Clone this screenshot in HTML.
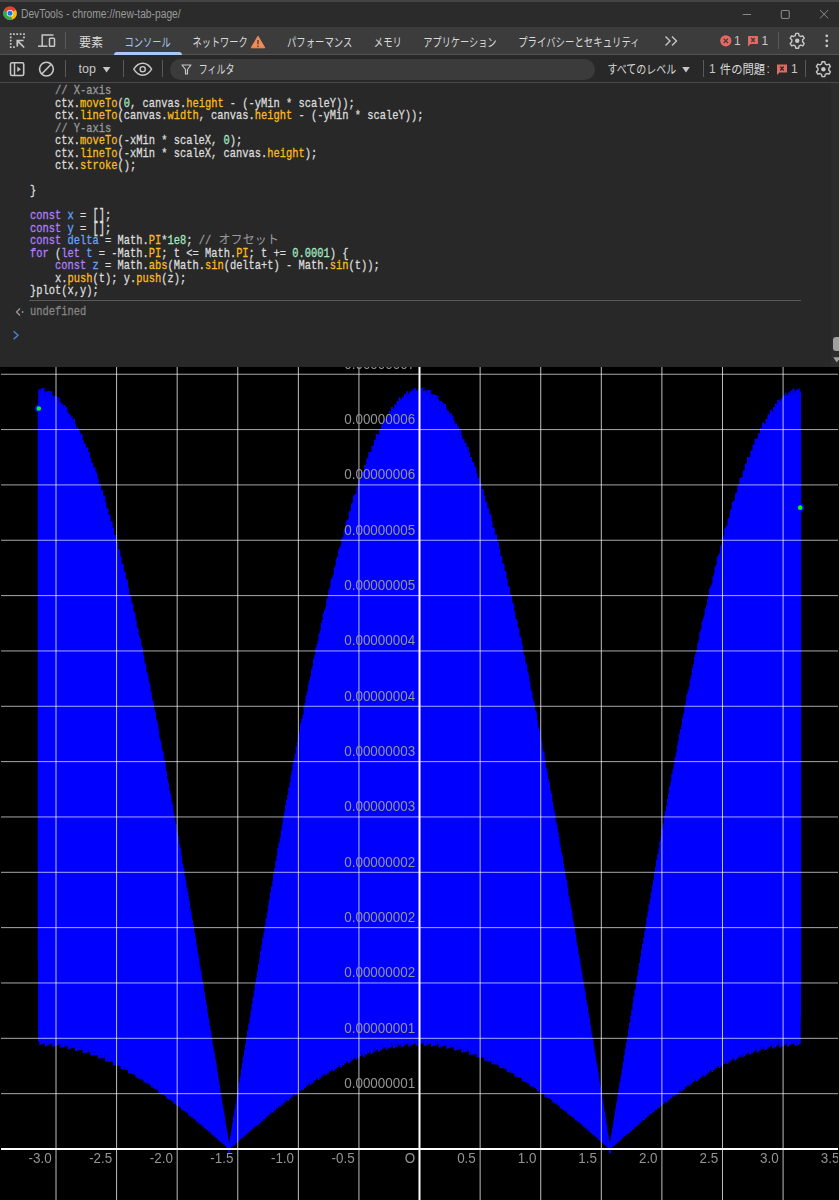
<!DOCTYPE html>
<html lang="ja">
<head>
<meta charset="utf-8">
<title>DevTools - chrome://new-tab-page/</title>
<style>
html,body{margin:0;padding:0;background:#000;}
body{width:839px;height:1200px;position:relative;overflow:hidden;font-family:"Liberation Sans",sans-serif;}
.abs{position:absolute;}
#winborder{left:0;top:0;width:839px;height:2px;background:#444;}
#titlebar{left:0;top:2px;width:839px;height:25px;background:#2b2b2b;}
#title{left:21px;top:6px;font-size:12px;line-height:16px;color:#9a9a9a;white-space:nowrap;transform-origin:0 0;transform:scaleX(.855);}
#tabbar{left:0;top:27px;width:839px;height:27px;background:#3c3c3c;}
#tabline{left:0;top:54px;width:839px;height:1px;background:#545454;}
#toolbar{left:0;top:55px;width:839px;height:27px;background:#282828;}
#toolline{left:0;top:82px;width:839px;height:1px;background:#4a4a4a;}
#console{left:0;top:83px;width:839px;height:284px;background:#282828;}
#tabsel{left:114px;top:52px;width:68px;height:3px;background:#a8c7fa;border-radius:3px 3px 0 0;}
#pill{left:170px;top:59px;width:425px;height:21px;border-radius:11px;background:#3b3b3b;}
.sep{width:1px;background:#5a5a5a;}
.lat{font-size:12px;line-height:14px;color:#c7c7c7;white-space:nowrap;opacity:.999;}
#code{left:29.6px;top:85px;font-family:"Liberation Mono",monospace;font-size:13.2px;line-height:12.5px;color:#dcdcdc;white-space:pre;transform:scaleX(.78914);transform-origin:0 0;margin:0;-webkit-text-stroke:.3px;}
#code .b{display:inline-block;transform:scaleY(1.28);transform-origin:50% 55%;}
#code .c{color:#9a9a9a;}
#code .p{color:#fcbb1c;}
#code .n{color:#a2e8c2;}
#code .k{color:#b07eff;}
#code .d{color:#64a2ff;}
#divider{left:29px;top:300px;width:772px;height:1px;background:#5a5a5a;}
#undef{left:29.6px;top:306px;font-family:"Liberation Mono",monospace;font-size:13.2px;line-height:12.5px;color:#858585;white-space:pre;transform:scaleX(.78914);transform-origin:0 0;-webkit-text-stroke:.3px;}
#sbtrack{left:831px;top:83px;width:8px;height:284px;background:#2c2c2c;}
#sbthumb{left:833px;top:337px;width:10px;height:13.5px;border-radius:3px;background:#9f9f9f;}
</style>
</head>
<body>
<div class="abs" id="winborder"></div>
<div class="abs" id="titlebar"></div>
<div class="abs" id="title">DevTools - chrome://new-tab-page/</div>
<div class="abs" id="tabbar"></div>
<div class="abs" id="tabline"></div>
<div class="abs" id="tabsel"></div>
<div class="abs" id="toolbar"></div>
<div class="abs" id="toolline"></div>
<div class="abs" id="pill"></div>
<div class="abs" id="console"></div>
<div class="abs" id="sbtrack"></div>
<div class="abs" id="sbthumb"></div>

<!-- separators -->
<div class="abs sep" style="left:65px;top:32px;height:17px"></div>
<div class="abs sep" style="left:778px;top:32px;height:17px"></div>
<div class="abs sep" style="left:65px;top:60px;height:17px"></div>
<div class="abs sep" style="left:122.5px;top:60px;height:17px;width:1.5px"></div>
<div class="abs sep" style="left:162px;top:60px;height:17px"></div>
<div class="abs sep" style="left:703px;top:60px;height:17px"></div>
<div class="abs sep" style="left:805px;top:60px;height:17px"></div>

<!-- latin labels -->
<div class="abs lat" style="left:78.5px;top:62px;font-size:12.5px">top</div>
<div class="abs lat" style="left:734px;top:34px;">1</div>
<div class="abs lat" style="left:761.5px;top:34px;">1</div>
<div class="abs lat" style="left:709px;top:62px;">1</div>
<div class="abs lat" style="left:766.5px;top:62px;">:</div>
<div class="abs lat" style="left:791px;top:62px;">1</div>

<!-- icons -->
<svg class="abs" style="left:0;top:0" width="839" height="83" viewBox="0 0 839 83" fill="none">
  <!-- chrome logo -->
  <g transform="translate(10,13.3)">
    <circle r="6.8" fill="#e94235"/>
    <path d="M0 0L-5.9 -3.4A6.8 6.8 0 0 0 2.2 6.43Z" fill="#34a853"/>
    <path d="M0 0L2.2 6.43A6.8 6.8 0 0 0 5.9 -3.4L0 -3.4Z" fill="#fbbc04"/>
    <path d="M0 0L-5.9 -3.4A6.8 6.8 0 0 1 5.9 -3.4Z" fill="#e94235"/>
    <circle r="3.2" fill="#fff"/>
    <circle r="2.5" fill="#1a73e8"/>
  </g>
  <!-- window controls -->
  <path d="M742.8 14.5H751" stroke="#8a8a8a" stroke-width="1"/>
  <rect x="781.3" y="10.5" width="8" height="8" rx="1.4" stroke="#8a8a8a" stroke-width="1.1"/>
  <path d="M820 10L828.2 18.4M828.2 10L820 18.4" stroke="#8a8a8a" stroke-width="1"/>
  <!-- inspect icon -->
  <path d="M9.85 33.35h1.7v1.7h-1.7zM13.10 33.35h1.7v1.7h-1.7zM16.35 33.35h1.7v1.7h-1.7zM19.75 33.35h1.7v1.7h-1.7zM23.15 33.35h1.7v1.7h-1.7zM9.85 36.55h1.7v1.7h-1.7zM9.85 39.75h1.7v1.7h-1.7zM9.85 42.95h1.7v1.7h-1.7zM9.85 46.25h1.7v1.7h-1.7zM13.10 46.25h1.7v1.7h-1.7zM23.15 36.55h1.7v1.7h-1.7z" fill="#c7c7c7"/>
  <path d="M17.3 40.6L24.2 47.5M17.3 46.4V40.5H23.6" stroke="#c7c7c7" stroke-width="1.7"/>
  <!-- device icon -->
  <g stroke="#c7c7c7" stroke-width="1.5">
    <path d="M42.2 46V35H53.5"/>
    <path d="M38 46.2H47.5"/>
    <rect x="49.5" y="38.2" width="5" height="8" rx="0.8"/>
  </g>
  <!-- warning triangle -->
  <path d="M258 36.2L264.8 47.8H251.2Z" fill="#f28b55" stroke="#f28b55" stroke-width="1" stroke-linejoin="round"/>
  <path d="M258 40V44.3M258 45.6V47" stroke="#3c3c3c" stroke-width="1.3"/>
  <!-- chevrons -->
  <path d="M665.5 36.5L670 41L665.5 45.5M672 36.5L676.5 41L672 45.5" stroke="#c7c7c7" stroke-width="1.4"/>
  <!-- error icon -->
  <circle cx="725.8" cy="40.8" r="5.6" fill="#e46962"/>
  <path d="M723.6 38.6L728 43M728 38.6L723.6 43" stroke="#3c3c3c" stroke-width="1.3"/>
  <!-- issue flag (tab bar) -->
  <path d="M748 36H758V44H750.5L748 46.5Z" fill="#e46962"/>
  <path d="M751.3 38L754.7 42M754.7 38L751.3 42" stroke="#3c3c3c" stroke-width="1.2"/>
  <!-- gear (tab bar) -->
  <g transform="translate(797.2,40.8)"><use href="#gear"/></g>
  <!-- dots -->
  <circle cx="826.8" cy="35.8" r="1.4" fill="#c7c7c7"/><circle cx="826.8" cy="40.8" r="1.4" fill="#c7c7c7"/><circle cx="826.8" cy="45.8" r="1.4" fill="#c7c7c7"/>
  <!-- sidebar icon -->
  <rect x="10.5" y="62.7" width="13.2" height="12.8" rx="1.5" stroke="#c7c7c7" stroke-width="1.6"/>
  <path d="M14.5 62.7V75.5" stroke="#c7c7c7" stroke-width="1.5"/>
  <path d="M17.3 66.4L20.8 69.2L17.3 72Z" fill="#c7c7c7"/>
  <!-- clear icon -->
  <circle cx="46.45" cy="69.1" r="6.9" stroke="#c7c7c7" stroke-width="1.6"/>
  <path d="M41.7 74L51.2 64.2" stroke="#c7c7c7" stroke-width="1.6"/>
  <!-- top dropdown -->
  <path d="M102.8 66.9H110.4L106.6 72.6Z" fill="#c7c7c7"/>
  <!-- eye -->
  <path d="M133.8 69.2C136.5 64.6 140 63.2 142.7 63.2C145.4 63.2 148.9 64.6 151.6 69.2C148.9 73.8 145.4 75.2 142.7 75.2C140 75.2 136.5 73.8 133.8 69.2Z" stroke="#c7c7c7" stroke-width="1.4"/>
  <circle cx="142.7" cy="69.2" r="2.6" stroke="#c7c7c7" stroke-width="1.4"/>
  <!-- funnel -->
  <path d="M182 65H191L187.5 69.5V74H185.5V69.5Z" stroke="#c7c7c7" stroke-width="1.2" stroke-linejoin="round"/>
  <!-- level dropdown -->
  <path d="M682.2 66.9H689.8L686 72.6Z" fill="#c7c7c7"/>
  <!-- issue flag toolbar -->
  <path d="M777 64.5H787V72.5H779.5L777 75Z" fill="#e46962"/>
  <path d="M780.3 66.5L783.7 70.5M783.7 66.5L780.3 70.5" stroke="#282828" stroke-width="1.2"/>
  <!-- gear (toolbar) -->
  <g transform="translate(823.4,69.2)"><use href="#gear"/></g>
  <!-- scrollbar arrows -->
  <path d="M833.2 92.9L836.8 86.7L840.4 92.9Z" fill="#9f9f9f"/>
  <defs>
    <g id="gear">
      <path d="M-1.4 -7.6H1.4L1.9 -5.4L3.5 -4.5L5.6 -5.2L7 -2.8L5.4 -1.2V0.8L7 2.4L5.6 4.8L3.5 4.1L1.9 5L1.4 7.2H-1.4L-1.9 5L-3.5 4.1L-5.6 4.8L-7 2.4L-5.4 0.8V-1.2L-7 -2.8L-5.6 -5.2L-3.5 -4.5L-1.9 -5.4Z" stroke="#c7c7c7" stroke-width="1.4" stroke-linejoin="round" transform="translate(0,0.2)"/>
      <circle r="2.2" fill="#c7c7c7"/>
    </g>
  </defs>
</svg>
<svg class="abs" style="left:0;top:83px" width="839" height="284" viewBox="0 83 839 284" fill="none">
  <path d="M833.2 357.2H840.4L836.8 362.6Z" fill="#9f9f9f"/>
  <!-- result arrow -->
  <path d="M20 308.5L16.5 312L20 315.5" stroke="#9a9a9a" stroke-width="1.3"/>
  <circle cx="22.6" cy="312" r="0.9" fill="#9a9a9a"/>
  <!-- prompt -->
  <path d="M13.6 331.3L18 335.3L13.6 339.3" stroke="#4a80dc" stroke-width="1.4"/>
  <text x="218.5" y="244" font-size="12" fill="#9a9a9a" textLength="60.5" lengthAdjust="spacing" style='font-family:"Liberation Sans","Noto Sans CJK JP",sans-serif'>オフセット</text>
</svg>

<svg style="position:absolute;left:0;top:0" width="839" height="83" viewBox="0 0 839 83" font-size="12" style='font-family:"Liberation Sans","Noto Sans CJK JP",sans-serif'>
<g style='font-family:"Liberation Sans","Noto Sans CJK JP",sans-serif' font-size="12">
<text x="79" y="47" fill="#dadada" textLength="24.2" lengthAdjust="spacingAndGlyphs">要素</text>
<text x="124.5" y="47" fill="#a8c7fa" textLength="46.2" lengthAdjust="spacingAndGlyphs">コンソール</text>
<text x="192.5" y="47" fill="#dadada" textLength="55.2" lengthAdjust="spacingAndGlyphs">ネットワーク</text>
<text x="287" y="47" fill="#dadada" textLength="65.4" lengthAdjust="spacingAndGlyphs">パフォーマンス</text>
<text x="373.8" y="47" fill="#dadada" textLength="28" lengthAdjust="spacingAndGlyphs">メモリ</text>
<text x="423.3" y="47" fill="#dadada" textLength="73.2" lengthAdjust="spacingAndGlyphs">アプリケーション</text>
<text x="518.2" y="47" fill="#dadada" textLength="121.5" lengthAdjust="spacingAndGlyphs">プライバシーとセキュリティ</text>
<text x="198.8" y="73.5" fill="#dadada" textLength="35.7" lengthAdjust="spacingAndGlyphs">フィルタ</text>
<text x="607.5" y="73.5" fill="#dadada" textLength="68.8" lengthAdjust="spacingAndGlyphs">すべてのレベル</text>
<text x="719.8" y="73.5" fill="#dadada" textLength="45.4" lengthAdjust="spacingAndGlyphs">件の問題</text>
</g>
</svg>

<pre class="abs" id="code">    <span class="c">// X-axis</span>
    ctx.<span class="p">moveTo</span>(<span class="n">0</span>, canvas.<span class="p">height</span> - (-yMin * scaleY));
    ctx.<span class="p">lineTo</span>(canvas.<span class="p">width</span>, canvas.<span class="p">height</span> - (-yMin * scaleY));
    <span class="c">// Y-axis</span>
    ctx.<span class="p">moveTo</span>(-xMin * scaleX, <span class="n">0</span>);
    ctx.<span class="p">lineTo</span>(-xMin * scaleX, canvas.<span class="p">height</span>);
    ctx.<span class="p">stroke</span>();

}

<span class="k">const</span> <span class="d">x</span> = <span class="b">[]</span>;
<span class="k">const</span> <span class="d">y</span> = <span class="b">[]</span>;
<span class="k">const</span> <span class="d">delta</span> = Math.<span class="p">PI</span>*<span class="n">1e8</span>; <span class="c">// </span>
<span class="k">for</span> (<span class="k">let</span> <span class="d">t</span> = -Math.<span class="p">PI</span>; t &lt;= Math.<span class="p">PI</span>; t += <span class="n">0.0001</span>) {
    <span class="k">const</span> <span class="d">z</span> = Math.<span class="p">abs</span>(Math.<span class="p">sin</span>(delta+t) - Math.<span class="p">sin</span>(t));
    x.<span class="p">push</span>(t); y.<span class="p">push</span>(z);
}plot(x,y);</pre>
<div class="abs" id="divider"></div>
<div class="abs" id="undef">undefined</div>

<svg style="position:absolute;left:0;top:367px" width="839" height="833" viewBox="0 367 839 833">
<rect x="0" y="367" width="839" height="833" fill="#000"/>
<path d="M37.75 959.5V408.5h.5V389.5h2V392.7h.25V388.6h2V388h2V391.4h1.25V395h.25V391.2h2V391.1h2V394.9h.25V391.3h2V395.3h1V399.2h.25V395.8h2V396.6h2V400.8h.25V397.6h2V402h1.25V403.4h2V407.9h.25V405h2V406.9h2V411.7h1.25V413.9h2V418.8h.25V416.4h2V421.4h.25V419h2V424.2h1V429.4h.25V427.3h2V430.5h2V436h.25V434.1h2V439.6h1.25V443.4h2V449.1h.25V447.5h2V451.8h2V457.7h1.25V462.4h2V468.4h.25V467.3h2V472.4h2V478.6h1.25V484.8h.25V484h2V489.7h2V496.1h.25V495.5h2V502.1h1V508.6h.25V508.2h2V514.6h2V521.4h.25V521.2h2V528h1.25V534.9h1V535h1V541.7h.25V541.9h1V542.1h1V548.8h.25V549.1h.75V549.4h1V556.1h.25V556.5h1V563.1h.25V563.5h1V564.1h1V571.2h1V571.9h1V578.4h.25V579.1h1V579.9h1V587.2h1V593.6h.25V594.5h1V595.5h1V601.8h.25V602.8h1V604h.75V610.2h.25V611.4h1V612.6h1V618.8h.25V620.1h1V627.6h1V629h1V635.1h.25V636.6h1V638.2h1V644.1h.25V645.8h.75V647.5h1V653.4h.25V655.1h1V660.9h.25V662.8h1V664.6h.75V670.4h.25V672.3h1V674.4h1V680h.25V682.1h1V684.2h.75V689.8h.25V692h1V697.6h.25V699.8h1V702.1h1V707.6h.25V709.9h.75V712.4h1V717.8h.25V720.3h1V722.8h1V728.1h.25V730.7h.75V735.9h.25V738.6h1V741.4h1V746.5h.25V749.3h1V752.2h1V760.1h1V763.1h1V768h.25V771.1h1V775.9h.25V779h.75V782.2h1V786.9h.25V790.2h1V793.5h1V798.1h.25V801.4h1V804.9h.75V809.4h.25V812.9h1V817.4h.25V820.9h1V824.4h1V832.4h1V836.1h1V840.4h.25V844.2h1V848h1V852.1h.25V856h.75V860.1h.25V864h1V868h1V872h.25V875.9h.25V876h.75V880.1h.75V883.9h.25V887.8h.25V888.1h.75V891.9h.25V892.3h.75V896h.25V899.8h.25V900.3h.75V904h.25V908.2h.75V911.9h.25V912.6h.75V916.2h.25V919.7h.25V920.6h.75V924.1h.25V925h.75V928.5h.25V933h.75V936.4h.25V937.6h.75V940.9h.25V944.2h.25V945.5h.75V948.8h.25V952.1h.25V953.4h.75V956.6h.25V958.1h.5V961.3h.25V964.5h.25V966h.75V969.1h.25V970.9h.75V973.9h.25V976.9h.25V978.8h.75V981.7h.25V983.7h.75V989.5h.25V991.6h.75V994.4h.25V997.2h.25V999.4h.75V1002.2h.25V1004.4h.75V1007.2h.25V1009.9h.25V1012.2h.5V1014.9h.25V1017.4h.75V1020h.25V1022.6h.25V1025.2h.75V1027.7h.25V1030.2h.25V1030.4h.5V1032.9h.25V1035.4h.25V1038.2h.75V1043h.25V1045.4h.25V1045.9h.5V1048.3h.25V1050.6h.25V1051.3h.5V1053.6h.25V1055.9h.25V1058.1h.25V1059h.5V1061.2h.25V1063.4h.25V1064.4h.5V1068.8h.25V1070.9h.25V1072.1h.5V1074.2h.25V1076.3h.25V1077.7h.5V1079.7h.25V1081.7h.25V1083.7h.25V1085.3h.5V1087.3h.25V1089.2h.25V1092.9h.75V1096.6h.25V1098.5h.5V1100.4h.25V1102.2h.25V1104h.25V1105.7h.25V1106.1h.25V1107.8h.25V1109.6h.25V1111.3h.25V1111.8h.25V1113.5h.25V1115.2h.25V1116.9h.25V1119.3h.5V1122.6h.25V1124.2h.25V1125.2h.25V1126.8h.25V1128.3h.25V1129.9h.25V1131.4h.25V1132.6h.25V1134.1h.25V1135.6h.25V1137.1h.25V1138.5h.25V1140h.25V1141.4h.25V1142.9h.25V1142.1h.25V1140.8h.25V1138.7h.25V1137.4h.25V1136.1h.25V1135h.25V1133.8h.25V1131.4h.25V1130.2h.25V1129h.25V1126.8h.25V1125.2h.25V1123h.25V1121.9h.25V1120.9h.25V1118h.25V1116.9h.25V1115.9h.25V1114.9h.25V1113.9h.25V1110.8h.25V1109.8h.25V1108.9h.25V1108h.25V1104.6h.25V1103.7h.25V1102.8h.25V1101.1h.25V1100.3h.25V1097.5h.25V1095.8h.25V1095h.25V1091.2h.25V1090.4h.25V1089.6h.25V1088.9h.25V1088.2h.25V1084.1h.25V1083.4h.25V1082.7h.25V1082h.25V1077.7h.25V1077.1h.25V1076.4h.25V1075.8h.25V1074.7h.25V1070.7h.25V1069.6h.25V1069h.25V1068.5h.25V1063.8h.25V1063.2h.25V1062.8h.25V1062.3h.25V1057.3h.25V1056.9h.25V1056.4h.25V1056h.25V1055.7h.25V1050.4h.25V1050h.25V1049.7h.25V1049.1h.25V1043.9h.25V1043.6h.25V1043h.25V1042.8h.25V1037.1h.25V1036.8h.25V1036.6h.25V1036.4h.25V1030.5h.25V1030.3h.25V1030.2h.25V1030h.25V1029.9h.25V1023.7h.25V1023.6h.25V1023.5h.5V1023.4h.25V1017h1V1010.4h1V1003.8h1V997.1h1.25V990.5h1V983.7h1V977.3h1.25V970.8h1V964h1.25V957.7h.75V950.8h1.25V944.6h1V937.6h1.25V931.4h1V925.3h1V918.4h1.25V912.4h1V905.3h1V899.4h1V892.3h1.25V886.5h1.25V880.7h.75V873.6h1.25V867.9h1V860.8h1.25V855.2h.75V848h1.25V842.6h1.25V837.1h1V829.9h1V824.6h1V817.4h1.25V812.2h1V804.9h1V799.8h1.25V794.8h1V787.5h1.25V782.6h1V775.3h1V770.5h1V763.2h1.25V758.4h1V753.8h1V746.5h1.25V742h1V734.6h1.25V730.2h.75V722.9h1.25V718.6h1.25V714.4h1V707.1h1V702.9h1V695.6h1.25V691.6h1V684.3h1V680.4h1.25V676.6h1V669.3h1.25V665.7h.75V658.4h1.25V654.8h1V647.5h1.25V644.1h1V640.7h1V633.5h1.25V630.3h1V623h1V619.9h1V612.7h1.25V609.7h1.25V606.8h1V599.6h1V596.9h1V589.7h1.25V587.1h1V580h1V577.5h1.25V575.1h1V568h1V565.7h1V558.6h1.25V556.5h1V549.4h1.25V547.4h1V545.5h1V538.5h1.25V536.7h1V529.8h1V528.2h1V521.3h1.25V519.7h1.25V518.3h.75V511.5h1.25V510.2h1V503.4h1.25V502.3h.75V495.6h1.25V494.5h1.25V493.6h1V487h1V486.2h1V479.6h1.25V478.9h1V472.4h1V471.9h1.25V471.4h1V465h1.25V464.7h1V458.3h1V458.2h1V451.9h1.25V451.8h2V445.7h2V445.9h.25V439.8h2V434.1h2V434.5h1.25V435.1h.25V429.2h2V424h2V424.8h.25V419.1h2V420h1V421.1h.25V415.4h2V411h2V412.4h.25V406.9h2V408.4h1.25V404.6h2V406.2h.25V401h2V397.6h2V399.6h1.25V396.6h2V398.8h.25V393.8h2V396.1h.25V391.3h2V393.7h1V396.3h.25V391.6h2V389.6h2V392.4h.25V387.9h2V390.8h1.25V389.5h2V392.6h.25V388.4h2V387.5h2V390.9h1.25V390.4h2V394h.25V390.1h4V393.9h1.25V397.8h.25V394.3h2V394.8h2V399h.25V395.7h2V399.9h1V404.2h.25V401.1h2V402.5h2V407h.25V404.1h2V408.8h1.25V410.8h2V415.6h.25V413h2V415.5h2V420.6h1.25V425.7h.25V423.4h2V426.5h2V431.8h.25V429.8h2V435.2h1V440.7h.25V438.9h2V442.7h2V448.4h.25V446.8h2V452.6h1.25V457.1h2V463h.25V461.8h2V466.6h2V472.8h1.25V478h2V484.3h.25V483.4h2V489.1h2V495.6h1.25V502h.25V501.5h2V507.7h2V514.4h.25V514.2h2V520.9h1V527.7h.25V527.6h2V534.4h.25V534.5h2V541.5h1V541.7h1V548.4h.25V548.7h1V555.4h.25V555.7h.75V556.1h1V562.7h.25V563.2h1V563.7h1V570.3h.25V570.9h1V571.6h.75V578.1h.25V578.8h1V585.3h.25V586.1h1V586.9h1V594.2h1V595.2h1V601.5h.25V602.6h1V603.7h1V610h.25V611.2h.75V617.4h.25V618.6h1V619.9h1V626h.25V627.4h1V628.9h.75V634.9h.25V636.4h1V638h1V644h.25V645.6h1V651.5h.25V653.2h.75V655h1V660.8h.25V662.7h1V664.6h1V670.3h.25V672.3h.75V674.3h1V680h.25V682h1V687.7h.25V689.8h1V692h.75V697.5h.25V699.8h1V702.1h1V707.6h.25V710h1V712.4h1V720.3h1V725.6h.25V728.1h1V730.8h1V736h.25V738.7h.75V741.4h1V746.5h.25V749.4h1V752.3h1V757.3h.25V760.2h1V768.1h1V771.2h1V776.1h.25V779.2h1V782.4h1V790.3h1V793.6h1V798.3h.25V801.6h1V806.2h.25V809.6h1V813.1h.75V817.6h.25V821.1h1V824.7h1V829.1h.25V832.7h1V836.4h.75V840.7h.25V844.4h1V848.6h.25V852.4h1V856.3h1V860.4h.25V864.3h.75V868.3h1V872.3h.25V876.2h.25V876.3h.75V880.2h.25V880.4h.75V884.3h.25V888.4h.75V892.2h.25V896h.25V896.4h.75V900.1h.25V900.7h.75V904.3h.25V908h.25V908.6h.75V912.3h.25V913h.5V916.6h.25V920.1h.25V921h.75V924.5h.25V925.4h.75V928.9h.25V932.4h.25V933.4h.75V936.8h.25V941.4h.75V944.7h.25V946h.75V949.3h.25V952.5h.25V953.9h.75V957.1h.25V958.6h.75V961.8h.25V964.9h.25V966.5h.5V969.6h.25V971.4h.75V974.4h.25V977.4h.25V979.3h.75V982.2h.25V985.2h.25V987.1h.75V990h.25V992.1h.75V997.8h.25V999.9h.75V1002.7h.25V1005h.75V1007.7h.25V1010.4h.25V1012.8h.75V1015.5h.25V1018h.75V1023.2h.25V1025.7h.25V1025.8h.5V1028.3h.25V1030.8h.25V1033.3h.25V1033.5h.5V1036h.25V1038.4h.25V1038.8h.5V1041.2h.25V1043.6h.25V1046.5h.75V1051.2h.25V1051.9h.5V1054.2h.25V1056.5h.25V1058.7h.25V1059.6h.5V1061.8h.25V1064h.25V1065.1h.5V1067.3h.25V1069.4h.25V1071.5h.25V1072.8h.5V1076.9h.25V1078.9h.25V1080.4h.5V1082.4h.25V1084.4h.25V1086h.5V1087.9h.25V1089.9h.25V1091.8h.25V1093.5h.5V1095.4h.25V1097.3h.25V1099.2h.5V1101.1h.25V1104.7h.25V1106.4h.25V1106.8h.25V1108.5h.25V1110.3h.25V1112h.25V1112.5h.25V1114.2h.25V1115.9h.25V1117.6h.25V1119.2h.25V1120h.25V1121.7h.25V1123.3h.25V1124.9h.25V1127.5h.5V1130.6h.25V1132.1h.25V1133.4h.25V1134.9h.25V1136.3h.25V1137.8h.25V1139.2h.25V1140.6h.25V1142h.25V1143.3h.25V1141.3h.25V1140.1h.25V1137.9h.25V1136.6h.25V1135.4h.25V1134.2h.25V1133h.25V1130.6h.25V1129.4h.25V1128.2h.25V1127.1h.25V1126h.25V1123.3h.25V1122.2h.25V1120.1h.25V1119.1h.25V1117.2h.25V1115.1h.25V1114.1h.25V1113.2h.25V1110h.25V1109h.25V1108.1h.25V1107.2h.25V1103.8h.25V1102.8h.25V1102h.25V1101.1h.25V1100.3h.25V1096.6h.25V1095.8h.25V1095h.25V1093.4h.25V1090.3h.25V1089.5h.25V1088.1h.25V1087.3h.25V1083.2h.25V1082.5h.25V1081.9h.25V1081.2h.25V1080.6h.25V1076.2h.25V1075.6h.25V1075h.25V1074.4h.25V1069.8h.25V1069.3h.25V1068.7h.25V1067.7h.25V1067.2h.25V1062.9h.25V1061.9h.25V1061.5h.25V1061h.25V1056h.25V1055.6h.25V1055.2h.25V1054.8h.25V1049.5h.25V1049.2h.25V1048.8h.25V1048.5h.25V1043h.25V1042.7h.25V1042.4h.25V1042.1h.25V1041.7h.25V1036.2h.25V1035.9h.25V1035.5h.25V1035.4h.25V1029.4h.25V1029.2h.25V1029.1h.25V1029h.25V1022.8h.25V1022.7h.25V1022.6h.5V1022.5h.25V1016.1h1V1009.5h1.25V1002.8h.75V996.1h1.25V989.5h1.25V983.1h1V976.3h1V969.9h1V963h1.25V956.7h1V949.8h1V943.5h1.25V937.4h1V930.4h1.25V924.3h.75V917.3h1.25V911.3h1V904.3h1.25V898.3h1V892.5h1V885.4h1.25V879.6h1V872.5h1V866.8h1V859.7h1.25V854.1h1.25V848.6h.75V841.4h1.25V836h1V828.8h1.25V823.5h1V816.3h1V811h1.25V805.9h1V798.7h1V793.6h1V786.3h1.25V781.4h1V774.1h1.25V769.3h1V764.5h1V757.2h1.25V752.6h1V745.3h1V740.8h1V733.4h1.25V729h1.25V724.7h.75V717.4h1.25V713.1h1V705.8h1.25V701.7h.75V694.4h1.25V690.4h1.25V686.5h1V679.2h1V675.4h1V668.1h1.25V664.4h1V657.1h1V653.5h1.25V650.1h1V642.8h1.25V639.5h.75V632.2h1.25V629h1V621.7h1.25V618.6h1V615.6h1V608.4h1.25V605.5h1V598.4h1V595.6h1V588.4h1.25V585.8h1.25V583.3h1V576.2h1V573.7h1V566.7h1.25V564.4h1V557.3h1V555.2h1.25V553.1h1V546.1h1.25V544.2h.75V537.2h1.25V535.4h1V528.5h1.25V526.8h1V525.3h1V518.4h1.25V517h1V510.2h1V508.9h1V502.1h1.25V501h1.25V499.9h.75V493.2h1.25V492.3h1V485.6h1.25V484.8h.75V478.3h1.25V477.6h1.25V477h1V470.6h1V470.1h1V463.7h1.25V463.4h1V457h1V456.9h1.25V456.8h1V450.5h2V450.6h.25V444.4h2V438.5h2V438.8h1.25V433.3h2V433.8h.25V427.9h2V422.7h2V423.6h1.25V424.5h.25V418.8h2V414.2h2V415.4h.25V409.8h2V411.2h1V412.6h.25V407.1h2V403.4h2V405h.25V399.8h2V401.6h1.25V398.4h2V400.4h.25V395.4h2V392.7h2V395h1.25V392.6h2V395.1h.25V390.4h2V393.1h.25V388.5h2V391.3h1V394.2h.25V389.7h2V388.4h2V391.5h1.25V432.7h.25V983.7h-.25V1017.5h-.25V1043.9h-2V1045h-2V1041.8h-.25V1046.1h-2V1043h-1.25V1044.1h-2V1041.1h-.25V1045.3h-2V1046.5h-2V1043.5h-1.25V1044.8h-2V1041.8h-.25V1046.1h-2V1043.1h-.25V1047.4h-2V1044.4h-1V1041.5h-.25V1045.8h-2V1047.2h-2V1044.3h-.25V1048.6h-2V1045.8h-1V1043h-.25V1047.3h-2V1044.5h-.25V1048.8h-2V1050.3h-2V1047.5h-1.25V1049.1h-2V1046.4h-.25V1050.7h-2V1052.3h-2V1049.7h-1.25V1047.1h-.25V1051.4h-2V1053h-2V1050.5h-.25V1054.7h-2V1052.2h-1V1049.8h-.25V1054h-2V1055.7h-2V1053.3h-.25V1057.5h-2V1055.1h-1.25V1057h-2V1054.7h-.25V1058.8h-2V1060.6h-2V1058.4h-1.25V1056.3h-.25V1060.3h-2V1062.2h-2V1060.1h-.25V1064.1h-2V1062.1h-1V1060.1h-.25V1064h-2V1065.9h-2V1064h-.25V1067.9h-2V1066h-1.25V1068h-2V1066.3h-.25V1070h-2V1072h-2V1070.3h-1.25V1072.4h-2V1070.8h-.25V1074.4h-2V1076.4h-2V1074.9h-1.25V1073.5h-.25V1077h-2V1079.1h-2V1077.7h-.25V1081.1h-2V1079.8h-1V1078.6h-.25V1081.9h-2V1080.7h-.25V1084h-2V1086.1h-2V1085h-1.25V1087.1h-2V1086.1h-.25V1089.2h-2V1091.3h-2V1090.4h-1.25V1089.5h-.25V1092.5h-2V1094.7h-2V1093.9h-.25V1096.8h-2V1096h-1V1095.4h-.25V1098.2h-2V1100.3h-2V1099.7h-.25V1102.4h-2V1101.9h-1.25V1104h-2V1103.6h-.25V1106.1h-2V1108.2h-2V1107.9h-1.25V1110h-2V1109.8h-.25V1112.1h-2V1112h-.25V1114.2h-2V1114.1h-1.25V1116.2h-2V1118.3h-2.25V1120.3h-1.25V1120.4h-1V1120.6h-1V1122.5h-1.25V1122.7h-1V1124.5h-1V1124.8h-1V1126.6h-1.25V1126.9h-1.25V1127.3h-.75V1128.9h-1.25V1129.3h-1V1130.9h-1.25V1131.4h-.75V1132.9h-1.25V1133.4h-1.25V1134h-1V1135.4h-1V1136h-1V1137.3h-1.25V1138h-1V1139.3h-1V1140h-1.25V1140.8h-1V1141.9h-1.25V1142.8h-.75V1143.8h-1.25V1144.7h-1V1145.7h-1V1145.8h-.25V1146.6h-.25V1146.7h-.25V1146.8h-.25V1146.9h-.25V1147.6h-.25V1147.7h-.25V1147.9h-.25V1148h-.25V1148.5h-.25V1148.7h-.25V1148.9h-.25V1149h-2V1148.7h-.25V1148.5h-.25V1148.2h-.25V1148h-.25V1147.7h-.5V1147.4h-.25V1146.7h-.25V1146.6h-.5V1146.2h-.25V1145.9h-.75V1145.5h-.25V1145h-.25V1144.8h-.75V1144.3h-.25V1143.7h-.25V1143.6h-.75V1143h-1V1141.7h-1V1141.2h-1V1140.4h-.25V1139.9h-1V1139.5h-1V1138.1h-1V1137.2h-.25V1136.8h-1V1136.4h-1V1135.3h-.25V1135h-1V1134.7h-.75V1133.5h-.25V1133.3h-1V1133.1h-1V1131.7h-.25V1131.6h-1V1130h-1V1129.9h-1V1128.4h-.25V1128.3h-2V1126.8h-2V1125.1h-1.25V1123.5h-2V1121.7h-.25V1122h-2V1120.5h-2V1118.7h-1.25V1116.7h-.25V1117.2h-2V1115.8h-2V1113.8h-.25V1114.4h-2V1112.4h-1V1110.3h-.25V1111h-2V1108.9h-.25V1109.7h-2V1108.4h-2V1106.2h-1.25V1105h-2V1102.7h-.25V1103.7h-2V1102.6h-2V1100.2h-1.25V1097.8h-.25V1099.1h-2V1098h-2V1095.5h-.25V1096.9h-2V1094.4h-1V1091.9h-.25V1093.4h-2V1092.4h-2V1089.8h-.25V1091.5h-2V1088.9h-1.25V1087.9h-2V1085.3h-.25V1087.1h-2V1086.3h-2V1083.5h-1.25V1082.7h-2V1079.9h-.25V1082h-2V1079.1h-.25V1081.3h-2V1078.4h-1V1075.5h-.25V1077.8h-2V1077.1h-2V1074.2h-.25V1076.6h-2V1073.6h-1.25V1073.1h-2V1070.1h-.25V1072.6h-2V1072.1h-2V1069.1h-1.25V1068.7h-2V1065.6h-.25V1068.3h-2V1068h-2V1064.9h-1.25V1061.7h-.25V1064.6h-2V1064.4h-2V1061.2h-.25V1064.2h-2V1061h-1V1057.8h-.25V1060.9h-2V1060.8h-2V1057.5h-.25V1060.7h-2V1057.5h-3.25V1054.2h-.25V1057.5h-2V1057.6h-2V1054.3h-1.25V1051h-.25V1054.4h-2V1054.6h-2V1051.3h-.25V1054.8h-2V1051.5h-1V1048.2h-.25V1051.8h-2V1052h-2V1048.7h-.25V1052.4h-2V1049.1h-1.25V1049.5h-2V1046.1h-.25V1049.9h-2V1050.4h-2V1047h-1.25V1047.6h-2V1044.2h-.25V1048.1h-2V1048.7h-2V1045.4h-1.25V1042.1h-.25V1046h-2V1046.7h-2V1043.4h-.25V1047.5h-2V1044.2h-1V1040.9h-.25V1044.9h-2V1041.7h-.25V1045.7h-2V1046.6h-2V1043.3h-1.25V1044.2h-2V1041h-.25V1045.2h-2V1046.1h-2V1042.9h-1.25V1039.7h-.25V1043.9h-2V1045h-2V1041.8h-.25V1046.1h-2V1042.9h-1V1039.8h-.25V1044.1h-2V1045.2h-2V1042.1h-.25V1046.4h-2V1043.3h-1.25V1044.6h-2V1041.6h-.25V1045.9h-2V1047.2h-2V1044.2h-1.25V1045.5h-2V1042.6h-.25V1046.9h-2V1044h-.25V1048.3h-2V1045.4h-1V1042.6h-.25V1046.9h-2V1048.3h-2V1045.5h-.25V1049.8h-2V1047.1h-1.25V1048.6h-2V1045.9h-.25V1050.2h-2V1051.7h-2V1049.1h-1.25V1050.7h-2V1048.1h-.25V1052.4h-2V1054.1h-2V1051.5h-1.25V1049h-.25V1053.2h-2V1055h-2V1052.6h-.25V1056.7h-2V1054.3h-1V1052h-.25V1056.1h-2V1057.9h-2V1055.7h-.25V1059.8h-2V1057.5h-1.25V1059.4h-2V1057.2h-.25V1061.3h-2V1063.1h-2V1061.1h-1.25V1059h-.25V1063h-2V1064.9h-2V1063h-.25V1066.9h-2V1064.9h-1V1063.1h-.25V1066.9h-2V1068.9h-2V1067.1h-.25V1070.9h-2V1069.2h-1.25V1071.2h-2V1069.5h-.25V1073.2h-2V1075.2h-2V1073.7h-1.25V1075.7h-2V1074.3h-.25V1077.8h-2V1079.9h-2V1078.5h-1.25V1077.2h-.25V1080.6h-2V1082.7h-2V1081.5h-.25V1084.8h-2V1083.6h-1V1082.5h-.25V1085.7h-2V1084.6h-.25V1087.8h-2V1089.9h-2V1088.9h-1.25V1091.1h-2V1090.2h-.25V1093.2h-2V1095.3h-2V1094.5h-1.25V1093.8h-.25V1096.7h-2V1098.8h-2V1098.2h-.25V1100.9h-2V1100.3h-1V1099.8h-.25V1102.4h-2V1104.6h-2V1104.2h-.25V1106.7h-2V1106.3h-1.25V1108.4h-2V1108.2h-.25V1110.5h-2V1112.6h-2V1112.5h-1.25V1114.6h-2V1114.5h-.25V1116.6h-2.25V1118.7h-2.25V1118.9h-1V1120.8h-1V1121h-1V1122.9h-1.25V1123.1h-1V1124.9h-1.25V1125.2h-1V1125.5h-1V1127.2h-1.25V1127.6h-1V1129.2h-1V1129.6h-1V1131.2h-1.25V1131.7h-1.25V1132.2h-.75V1133.7h-1.25V1134.2h-1V1135.6h-1.25V1136.3h-.75V1137.6h-1.25V1138.2h-1.25V1139h-1V1140.2h-1V1141h-1V1142.1h-1.25V1142.9h-1V1144h-1V1144.9h-1.25V1145.8h-1V1146.7h-.25V1146.8h-.25V1146.9h-.25V1147.1h-.25V1147.2h-.25V1147.7h-.25V1148h-.25V1148.2h-.25V1148.4h-.25V1148.8h-.25V1149h-2V1148.9h-.25V1148.6h-.25V1148.4h-.25V1148.1h-.25V1147.9h-.25V1147.6h-.5V1147.3h-.25V1147h-.25V1146.6h-.25V1146.5h-.5V1146.1h-.25V1145.4h-.75V1144.9h-.25V1144.7h-.75V1144.2h-.25V1143.7h-.25V1143.5h-.75V1142.9h-1V1142.3h-.25V1141.7h-1V1141.2h-.75V1140.4h-.25V1139.9h-1V1139.1h-.25V1138.6h-1V1138.1h-1V1136.8h-1V1136.4h-1V1135.3h-.25V1135h-1V1134.8h-1V1133.3h-1V1132h-.25V1131.8h-1V1131.6h-1V1130.2h-.25V1130.1h-1V1130h-.75V1128.5h-.25V1128.4h-2V1126.8h-1.25V1125.2h-2V1123.5h-.25V1123.7h-2V1122.2h-2V1120.3h-1.25V1118.9h-2V1116.9h-.25V1117.4h-2V1115.5h-.25V1116h-2V1114h-1V1112h-.25V1112.6h-2V1111.3h-2V1109.2h-.25V1110h-2V1107.8h-1.25V1106.5h-2V1104.3h-.25V1105.3h-2V1104.1h-2V1101.8h-1.25V1100.6h-2V1098.2h-.25V1099.5h-2V1098.4h-2V1096h-1.25V1093.5h-.25V1094.9h-2V1093.9h-2V1091.3h-.25V1092.9h-2V1090.3h-1V1087.7h-.25V1089.4h-2V1088.5h-2V1085.8h-.25V1087.6h-2V1084.9h-1.25V1084.1h-2V1081.3h-.25V1083.3h-2V1082.6h-2V1079.8h-1.25V1076.9h-.25V1079.1h-2V1078.4h-2V1075.5h-.25V1077.8h-2V1074.9h-1V1071.9h-.25V1074.3h-2V1073.8h-2V1070.8h-.25V1073.3h-2V1070.3h-1.25V1069.8h-2V1066.8h-.25V1069.4h-2V1069.1h-2V1066h-1.25V1065.7h-2V1062.5h-.25V1065.4h-2V1065.2h-2V1062h-1.25V1058.8h-.25V1061.8h-2V1061.7h-2V1058.5h-.25V1061.6h-2V1058.4h-1V1055.1h-.25V1058.3h-2V1055.1h-.25V1058.3h-2V1058.4h-2V1055.1h-1.25V1055.2h-2V1051.9h-.25V1055.3h-2V1055.5h-2V1052.2h-1.25V1048.9h-.25V1052.4h-2V1052.7h-2V1049.4h-.25V1053h-2V1049.7h-1V1046.4h-.25V1050h-2V1050.4h-2V1047.1h-.25V1050.9h-2V1047.6h-1.25V1048h-2V1044.7h-.25V1048.6h-2V1049.1h-2V1045.8h-1.25V1046.4h-2V1043.1h-.25V1047.1h-2V1043.8h-.25V1047.8h-2V1044.5h-1V1041.2h-.25V1045.2h-2V1046h-2V1042.7h-.25V1046.8h-2V1043.5h-1.25V1044.4h-2V1041.2h-.25V1045.3h-2V1046.2h-2V1043h-1.25V1044h-2V1040.8h-.25V1045h-2V1041.8h-1.25V959.5h-.25Z" fill="#0000ff"/>
<path d="M228.15 1148H230.15V1152.5L229.15 1154L228.15 1152.5Z" fill="#0000ff"/>
<path d="M608.85 1148H610.85V1152.5L609.85 1154L608.85 1152.5Z" fill="#0000ff"/>
<path d="M56.00 367V1200M116.59 367V1200M177.18 367V1200M237.77 367V1200M298.36 367V1200M358.95 367V1200M480.13 367V1200M540.72 367V1200M601.31 367V1200M661.90 367V1200M722.49 367V1200M783.08 367V1200" stroke="#fff" stroke-opacity="0.74" stroke-width="1" fill="none"/>
<path d="M1 1093.66H838M1 1038.32H838M1 982.98H838M1 927.64H838M1 872.30H838M1 816.96H838M1 761.62H838M1 706.28H838M1 650.94H838M1 595.60H838M1 540.26H838M1 484.92H838M1 429.58H838M1 374.24H838" stroke="#fff" stroke-opacity="0.66" stroke-width="1" fill="none"/>
<path d="M1 1149H838M419.50 367V1200" stroke="#fff" stroke-width="2" fill="none"/>
<circle cx="38.80" cy="408.47" r="3.1" fill="#00ff00" stroke="#0000ff" stroke-width="1.6"/>
<circle cx="800.19" cy="507.65" r="3.1" fill="#00ff00" stroke="#0000ff" stroke-width="1.6"/>
<g font-family="Liberation Sans, sans-serif" font-size="14" fill="#959595" text-anchor="end" style="opacity:.999">
<text transform="translate(51.70,1162.9) scale(.96,1)">-3.0</text>
<text transform="translate(112.29,1162.9) scale(.96,1)">-2.5</text>
<text transform="translate(172.88,1162.9) scale(.96,1)">-2.0</text>
<text transform="translate(233.47,1162.9) scale(.96,1)">-1.5</text>
<text transform="translate(294.06,1162.9) scale(.96,1)">-1.0</text>
<text transform="translate(354.65,1162.9) scale(.96,1)">-0.5</text>
<text transform="translate(415.24,1162.9) scale(.96,1)">O</text>
<text transform="translate(475.83,1162.9) scale(.96,1)">0.5</text>
<text transform="translate(536.42,1162.9) scale(.96,1)">1.0</text>
<text transform="translate(597.01,1162.9) scale(.96,1)">1.5</text>
<text transform="translate(657.60,1162.9) scale(.96,1)">2.0</text>
<text transform="translate(718.19,1162.9) scale(.96,1)">2.5</text>
<text transform="translate(778.78,1162.9) scale(.96,1)">3.0</text>
<text transform="translate(839.37,1162.9) scale(.96,1)">3.5</text>
<text transform="translate(415.20,1088.16) scale(.96,1)">0.00000001</text>
<text transform="translate(415.20,1032.82) scale(.96,1)">0.00000001</text>
<text transform="translate(415.20,977.48) scale(.96,1)">0.00000002</text>
<text transform="translate(415.20,922.14) scale(.96,1)">0.00000002</text>
<text transform="translate(415.20,866.80) scale(.96,1)">0.00000002</text>
<text transform="translate(415.20,811.46) scale(.96,1)">0.00000003</text>
<text transform="translate(415.20,756.12) scale(.96,1)">0.00000003</text>
<text transform="translate(415.20,700.78) scale(.96,1)">0.00000004</text>
<text transform="translate(415.20,645.44) scale(.96,1)">0.00000004</text>
<text transform="translate(415.20,590.10) scale(.96,1)">0.00000005</text>
<text transform="translate(415.20,534.76) scale(.96,1)">0.00000005</text>
<text transform="translate(415.20,479.42) scale(.96,1)">0.00000006</text>
<text transform="translate(415.20,424.08) scale(.96,1)">0.00000006</text>
<text transform="translate(415.20,368.74) scale(.96,1)">0.00000007</text>
</g><rect x="838" y="367" width="1" height="833" fill="#000"/></svg>
</body>
</html>
